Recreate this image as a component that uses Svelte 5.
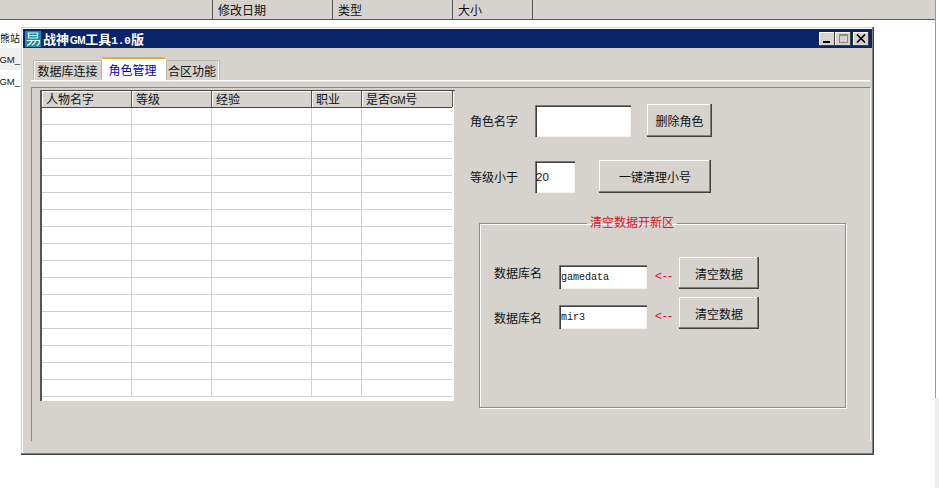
<script>
  const columns = [
    { label: '人物名字', width: 90 },
    { label: '等级', width: 80 },
    { label: '经验', width: 100 },
    { label: '职业', width: 50 },
    { label: '是否', tail: '号', gm: true, width: 91 }
  ];
  const rows = Array.from({ length: 17 }, (_, i) => i);
  const dbRows = ['gamedata', 'mir3'];
</script>

<div class="page">
  <header class="explorer-head">
    <span class="head-col first"></span>
    <span class="head-col date">修改日期</span>
    <span class="head-col type">类型</span>
    <span class="head-col size">大小</span>
  </header>

  <div class="desk">
    <aside class="behind">
      <span class="b1">熊站</span>
      <span class="b2">GM_</span>
      <span class="b3">GM_</span>
    </aside>

    <section class="window">
      <div class="titlebar">
        <svg class="logo" viewBox="0 0 16 16" width="16" height="16" aria-hidden="true">
          <rect width="16" height="16" fill="#1c8aa8" />
          <path d="M3.5 2h9v5h-9zM3.5 4.5h9" fill="none" stroke="#e6f8f2" stroke-width="1.2" />
          <path d="M1.5 9.5h13c0 3-1 5-3 5M7 9.5c-.8 2.6-2.6 4.2-5 5M10.8 9.5c-.8 2.4-2.2 3.8-4 4.8" fill="none" stroke="#e6f8f2" stroke-width="1.2" />
        </svg>
        <span class="title">战神<span class="t-gm">GM</span>工具<span class="t-ver">1.0</span>版</span>
        <div class="caption-btns">
          <button class="cap" aria-label="最小化"><i class="min"></i></button>
          <button class="cap" aria-label="最大化"><i class="max"></i></button>
          <button class="cap close" aria-label="关闭">
            <svg viewBox="0 0 10 9" width="10" height="9"><path d="M1 0.5l8 8M9 0.5l-8 8" stroke="#000" stroke-width="1.6" /></svg>
          </button>
        </div>
      </div>

      <nav class="tabs">
        <span class="tab t1">数据库连接</span>
        <span class="tab active">角色管理</span>
        <span class="tab t3">合区功能</span>
      </nav>

      <div class="rule"></div>

      <div class="panel">
        <div class="list">
          <div class="list-head">
            {#each columns as c}
              <span class="lh" style="width:{c.width}px">{c.label}{#if c.gm}<span class="gm">GM</span>{c.tail}{/if}</span>
            {/each}
          </div>
          <div class="list-body">
            {#each rows as r (r)}
              <div class="row">
                {#each columns as c}
                  <span class="cell" style="width:{c.width}px"></span>
                {/each}
              </div>
            {/each}
          </div>
        </div>

        <div class="side">
          <div class="line one">
            <label class="lbl" for="name">角色名字</label>
            <input id="name" class="field name" />
            <button class="btn del">删除角色</button>
          </div>
          <div class="line two">
            <label class="lbl" for="lv">等级小于</label>
            <input id="lv" class="field lv" value="20" />
            <button class="btn clean">一键清理小号</button>
          </div>

          <fieldset class="group">
            <legend>清空数据开新区</legend>
            {#each dbRows as db, i}
              <div class="db" class:second={i === 1}>
                <span class="db-label">数据库名</span>
                <input class="field dbf" value={db} />
                <span class="arrow">&lt;--</span>
                <button class="btn dbb">清空数据</button>
              </div>
            {/each}
          </fieldset>
        </div>
      </div>
    </section>
  </div>
  <div class="edge"></div>
</div>

<style>
  :global(body) {
    margin: 0;
    background: #fff;
    overflow: hidden;
  }
  .page {
    position: relative;
    width: 939px;
    height: 488px;
    overflow: hidden;
    font: 12px "Noto Sans CJK SC", "Liberation Sans", sans-serif;
    color: #111;
    background: #fff;
  }
  .explorer-head {
    display: flex;
    height: 20px;
    box-sizing: border-box;
    background: #d6d3ce;
    border-bottom: 1px solid #5c5a55;
    line-height: 20px;
  }
  .head-col {
    box-sizing: border-box;
    border-left: 1px solid #55534f;
    padding-left: 5px;
    height: 19px;
  }
  .head-col.first { width: 212px; border: 0; }
  .head-col.date { width: 120px; }
  .head-col.type { width: 120px; }
  .head-col.size { width: 81px; border-right: 1px solid #55534f; }

  .desk { display: flex; align-items: flex-start; }
  .behind {
    width: 21px;
    height: 80px;
    position: relative;
    flex: none;
    background: linear-gradient(#fff 28px, #efefef 28px, #efefef 50px, #fff 50px);
  }
  .behind span {
    position: absolute;
    right: 1px;
    white-space: nowrap;
    font-size: 10px;
  }
  .b1 { top: 10px; }
  .b2 { top: 34px; font-family: "Liberation Sans", sans-serif; font-size: 9.5px !important; }
  .b3 { top: 56px; font-family: "Liberation Sans", sans-serif; font-size: 9.5px !important; }

  .window {
    box-sizing: border-box;
    width: 853px;
    height: 428px;
    margin-top: 7px;
    padding: 2px;
    background: #d6d3ce;
    box-shadow: inset -1px -1px 0 #404040, inset -2px -2px 0 #808080, inset 1px 1px 0 #d6d3ce, inset 2px 2px 0 #fff;
  }
  .titlebar {
    display: flex;
    align-items: center;
    height: 19px;
    background: #0a246a;
    padding-left: 2px;
    color: #fff;
  }
  .logo { flex: none; margin-top: 1px; }
  .title {
    margin-left: 2px;
    font-weight: 700;
    font-size: 13px;
    line-height: 19px;
    white-space: nowrap;
  }
  .t-gm { font: 700 10px "Liberation Sans", sans-serif; letter-spacing: -0.5px; margin-left: 1px; }
  .t-ver { font: 700 11px "Liberation Mono", monospace; }
  .caption-btns { margin-left: auto; display: flex; padding-right: 3px; }
  .cap {
    box-sizing: border-box;
    width: 16px;
    height: 14px;
    padding: 0;
    border: 0;
    background: #d6d3ce;
    box-shadow: inset -1px -1px 0 #404040, inset 1px 1px 0 #fff;
    display: flex;
    align-items: center;
    justify-content: center;
    position: relative;
  }
  .cap.close { margin-left: 2px; }
  .min { width: 7px; height: 2px; background: #000; margin-top: 7px; margin-right: 2px; }
  .max { box-sizing: border-box; width: 9px; height: 9px; border: 1px solid #8c8a84; border-top-width: 2px; }

  .tabs {
    display: flex;
    align-items: flex-end;
    height: 23px;
    margin: 9px 0 0 10px;
  }
  .tab {
    box-sizing: border-box;
    height: 20px;
    border: 1px solid #b9b6ae;
    border-bottom: 0;
    border-radius: 2px 2px 0 0;
    line-height: 19px;
    text-align: center;
    background: #d6d3ce;
    white-space: nowrap;
  }
  .tab.t1 { width: 69px; box-shadow: inset 1px 1px 0 #fff; }
  .tab.active {
    width: 64px;
    height: 23px;
    padding-right: 3px;
    background: #fff;
    color: #0000c8;
    border: 0;
    border-top: 2px solid #e8a93c;
    line-height: 21px;
    position: relative;
  }
  .tab.t3 { width: 54px; padding-right: 2px; box-shadow: inset -1px 0 0 #fff; }

  .rule {
    height: 1px;
    margin: 0 0 0 8px;
    width: 839px;
    background: #fff;
    box-shadow: 0 1px 0 #e6e3dc;
  }
  .panel {
    box-sizing: border-box;
    display: flex;
    align-items: flex-start;
    width: 840px;
    height: 354px;
    margin: 6px 0 0 8px;
    padding: 2px 0 0 8px;
    border-top: 1px solid #8a8883;
    border-left: 1px solid #8a8883;
    border-right: 1px solid #fff;
  }

  .list {
    box-sizing: border-box;
    width: 415px;
    height: 311px;
    flex: none;
    background: #fff;
    border-top: 1px solid #404040;
    border-left: 2px solid #555;
    padding-right: 3px;
    overflow: hidden;
    box-shadow: inset -1px 0 0 #d6d3ce, inset 0 -1px 0 #fff;
  }
  .list-head { display: flex; height: 16px; background: #d6d3ce; border-bottom: 1px solid #444; }
  .lh {
    box-sizing: border-box;
    flex: none;
    height: 16px;
    padding-left: 4px;
    line-height: 16px;
    border-right: 1px solid #555;
    box-shadow: inset 1px 1px 0 #fff;
    white-space: nowrap;
  }
  .gm { font: 10px "Liberation Sans", sans-serif; letter-spacing: -0.5px; }
  .list-body { height: 293px; overflow: hidden; }
  .row { display: flex; height: 17px; }
  .cell {
    box-sizing: border-box;
    flex: none;
    height: 17px;
    border-right: 1px solid #d0d0d0;
    border-bottom: 1px solid #d0d0d0;
  }

  .side { margin-left: 16px; width: 395px; position: relative; }
  .line { display: flex; align-items: center; }
  .line.one { margin-top: 14px; height: 33px; }
  .line.two { margin-top: 23px; height: 33px; }
  .lbl { width: 65px; margin-left: -1px; flex: none; }
  .field {
    box-sizing: border-box;
    display: block;
    padding: 1px 0 0 2px;
    border: 0;
    border-radius: 0;
    outline: 0;
    background: #fff;
    color: #111;
    box-shadow: inset 1px 1px 0 #777, inset 2px 2px 0 #404040, inset -1px -1px 0 #f4f2ee;
    font: 10px "Liberation Mono", monospace;
  }
  .name { width: 96px; height: 32px; }
  .lv { width: 40px; height: 32px; padding-left: 1px; font: 11.5px "Liberation Sans", sans-serif; }
  .btn {
    box-sizing: border-box;
    padding: 0;
    border: 0;
    background: #d6d3ce;
    color: #111;
    font: 12px "Noto Sans CJK SC", "Liberation Sans", sans-serif;
    box-shadow: inset -1px -1px 0 #404040, inset -2px -2px 0 #808080, inset 1px 1px 0 #fff;
  }
  .del { width: 65px; height: 33px; margin-left: 16px; }
  .clean { width: 112px; height: 33px; margin-left: 24px; }

  .group {
    box-sizing: border-box;
    width: 367px;
    height: 192px;
    margin: 23px 0 0 8px;
    padding: 0;
    border: 1px solid #8f8d88;
    box-shadow: 1px 1px 0 #fff, inset 1px 1px 0 #fff;
  }
  legend {
    margin: 0 0 0 107px;
    padding: 0 3px;
    color: #e0101c;
    font-size: 12px;
    line-height: 14px;
    transform: translateY(-1px);
  }
  .db { display: flex; align-items: center; height: 32px; margin-left: 14px; margin-top: 27px; }
  .db.second { margin-top: 8px; }
  .db-label { width: 65px; flex: none; position: relative; top: -1px; }
  .db.second .db-label { top: 4px; }
  .dbf { width: 88px; height: 24px; margin-top: 8px; }
  .arrow {
    width: 24px;
    margin-left: 8px;
    flex: none;
    color: #e0101c;
    font: 12px "Liberation Sans", sans-serif;
    letter-spacing: 1px;
    margin-top: 6px;
  }
  .dbb { width: 80px; height: 32px; }

  .edge {
    position: absolute;
    top: 0;
    right: 0;
    bottom: 0;
    width: 4px;
    background: #eeeeee;
  }
  .edge::before {
    content: "";
    display: block;
    box-sizing: border-box;
    height: 398px;
    background: #fff;
    border-left: 1px solid #9a9a9a;
  }
</style>
